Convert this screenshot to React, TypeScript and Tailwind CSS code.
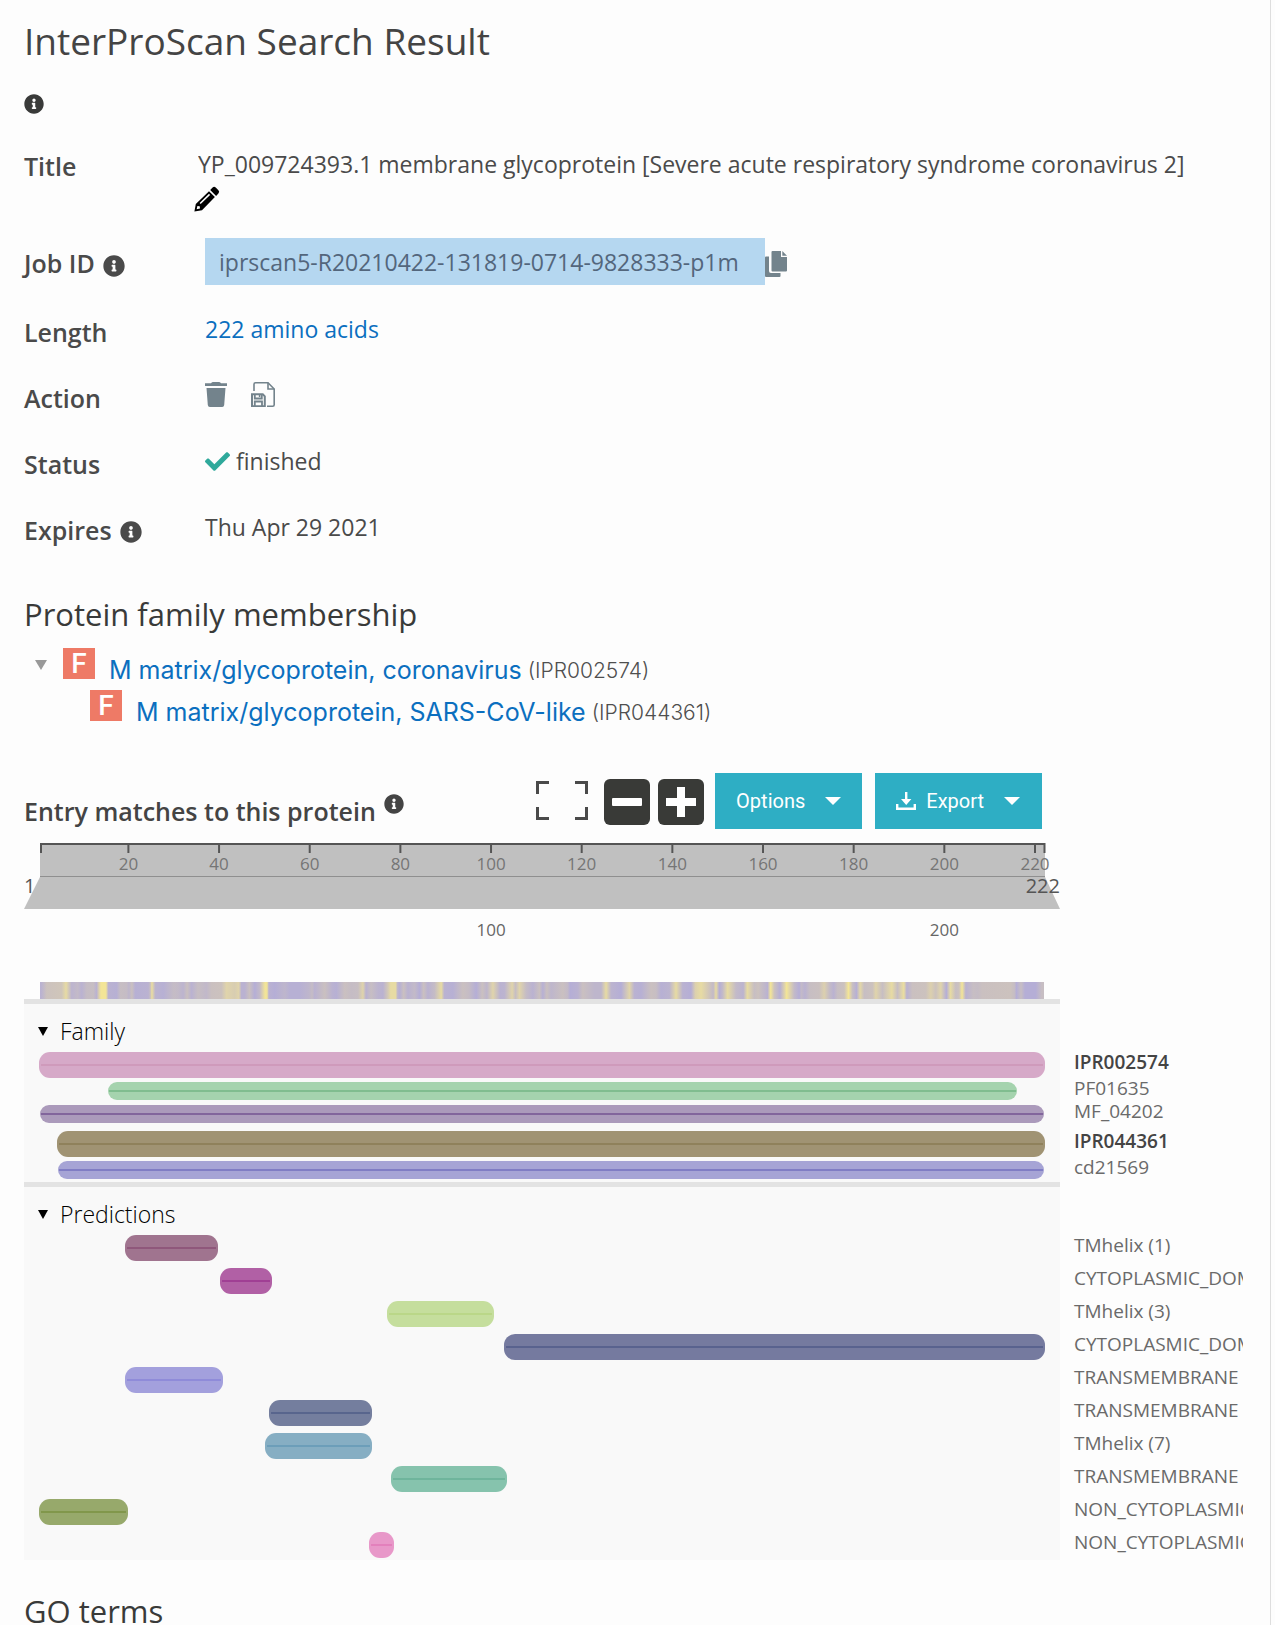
import React from "react";
import { FaInfoCircle, FaCheck } from "react-icons/fa";

const RESIDUES = 222;

type Bar = { label: string; start: number; end: number; fill: string; line: string };

const family: (Bar & { main: boolean; row: string })[] = [
  { label: "IPR002574", start: 1, end: 222, fill: "#d6a9c8", line: "#cd96b8", main: true, row: "h-[30px]" },
  { label: "PF01635", start: 16, end: 216, fill: "#a5d3ae", line: "#80bd8f", main: false, row: "h-[23px]" },
  { label: "MF_04202", start: 1, end: 222, fill: "#ab9abb", line: "#82659c", main: false, row: "h-[26px]" },
  { label: "IPR044361", start: 5, end: 222, fill: "#a09373", line: "#8b7d55", main: true, row: "h-[30px]" },
  { label: "cd21569", start: 5, end: 222, fill: "#a6a4d5", line: "#807dc4", main: false, row: "h-[21px]" },
];

const predictions: Bar[] = [
  { label: "TMhelix (1)", start: 20, end: 39, fill: "#a0748f", line: "#8b5076" },
  { label: "CYTOPLASMIC_DOMAIN", start: 41, end: 51, fill: "#b160a5", line: "#9c3790" },
  { label: "TMhelix (3)", start: 78, end: 100, fill: "#c5de9d", line: "#b6d583" },
  { label: "CYTOPLASMIC_DOMAIN", start: 104, end: 222, fill: "#757a9f", line: "#525c8a" },
  { label: "TRANSMEMBRANE", start: 20, end: 40, fill: "#a3a0dd", line: "#8a86d8" },
  { label: "TRANSMEMBRANE", start: 52, end: 73, fill: "#747e9e", line: "#515f88" },
  { label: "TMhelix (7)", start: 51, end: 73, fill: "#86aec3", line: "#659ab7" },
  { label: "TRANSMEMBRANE", start: 79, end: 103, fill: "#86c3ad", line: "#69b197" },
  { label: "NON_CYTOPLASMIC_DOMAIN", start: 1, end: 19, fill: "#97a96b", line: "#7c9244" },
  { label: "NON_CYTOPLASMIC_DOMAIN", start: 74, end: 78, fill: "#e898c9", line: "#e17bb9" },
];

// Hydrophobicity samples: position (out of 3015) and value (0 mauve, 0.5 beige, 1 yellow).
const hydro: [number, number][] = [
  [3, 0.1], [10, 0.25], [20, 0.5], [65, 0.55], [78, 0.85], [95, 0.15], [113, 0.3], [125, 0.1], [140, 0.35], [160, 0.4],
  [170, 0.1], [177, 0.7], [183, 1], [198, 1], [205, 0.1], [230, 0.05], [242, 0.4], [260, 0.35], [267, 0.2], [276, 0.45],
  [286, 0.05], [325, 0.1], [331, 0.4], [336, 0.9], [346, 0.15], [370, 0.05], [402, 0.35], [415, 0.3], [430, 0.15],
  [442, 0.45], [455, 0.1], [475, 0.4], [500, 0.25], [515, 0.45], [545, 0.5], [560, 0.75], [585, 0.65], [597, 0.75],
  [605, 0.1], [615, 0.1], [629, 0.45], [645, 0], [660, 0.3], [676, 1], [682, 0.95], [687, 0.1], [705, 0], [735, 0.2],
  [750, 0.05], [780, 0.05], [808, 0.2], [817, 0.35], [825, 0.1], [855, 0.45], [878, 0.1], [890, 0.05], [915, 0.45],
  [935, 0.35], [955, 0.4], [970, 0.75], [979, 0.1], [994, 0.4], [1015, 0.15], [1030, 0.1], [1045, 0.6], [1053, 0.85],
  [1068, 0.85], [1074, 0.2], [1080, 0.05], [1092, 0.45], [1105, 0.1], [1125, 0.3], [1140, 0], [1152, 0.45], [1165, 0.1],
  [1185, 0.35], [1205, 0.85], [1214, 0.1], [1240, 0.05], [1270, 0.45], [1288, 0.35], [1310, 0], [1328, 0.45],
  [1342, 0.2], [1360, 0.75], [1382, 0.1], [1395, 0.15], [1418, 0.75], [1428, 0.4], [1440, 0.75], [1460, 0.35],
  [1480, 0.1], [1500, 0.45], [1510, 0.05], [1522, 0.45], [1535, 0.2], [1570, 0.45], [1585, 0.3], [1592, 0], [1615, 0.1],
  [1630, 0.45], [1665, 0.2], [1685, 0.2], [1700, 0.85], [1715, 0.15], [1745, 0], [1770, 0.75], [1785, 0.1], [1805, 0.05],
  [1835, 0.45], [1850, 0.4], [1865, 0.05], [1890, 0.15], [1910, 0.85], [1930, 0.1], [1955, 0], [1968, 0.7], [1985, 0.85],
  [2005, 0.6], [2022, 0.3], [2030, 0.85], [2040, 0], [2050, 0.3], [2065, 0.85], [2090, 0.3], [2112, 0.15], [2124, 0.85],
  [2145, 0.4], [2157, 0.5], [2185, 0.1], [2194, 1], [2205, 0.5], [2222, 0.05], [2235, 0.7], [2242, 1], [2265, 0.3],
  [2280, 0], [2286, 0.3], [2297, 0.1], [2312, 0.4], [2340, 0.45], [2355, 0.7], [2370, 0.35], [2383, 0.1], [2395, 0.4],
  [2415, 0.5], [2428, 1], [2440, 0.4], [2452, 0.05], [2463, 0.8], [2475, 0.4], [2500, 0.5], [2510, 0.75], [2530, 0.4],
  [2558, 0.85], [2575, 0.4], [2594, 0.9], [2603, 0.1], [2620, 0.45], [2660, 0.5], [2675, 0.7], [2690, 0.5], [2705, 0.75],
  [2722, 0], [2734, 0.85], [2750, 0.4], [2760, 0.5], [2769, 1], [2780, 0.1], [2803, 0.4], [2815, 0.35], [2830, 0.45],
  [2915, 0.5], [2927, 0.35], [2932, 0], [2946, 0.4], [2958, 0], [2990, 0], [3008, 0.4],
];

const mauve = [181, 174, 214];
const beige = [204, 194, 190];
const yellow = [243, 229, 151];

function hydroColour(v: number) {
  const low = v < 0.5;
  const a = low ? mauve : beige;
  const b = low ? beige : yellow;
  const t = low ? v * 2 : v * 2 - 1;
  return `rgb(${a.map((c, i) => Math.round(c + (b[i] - c) * t)).join(",")})`;
}

const hydroGradient = `linear-gradient(to right, ${hydro
  .map(([x, v]) => `${hydroColour(v)} ${((x / 3015) * 100).toFixed(2)}%`)
  .join(", ")})`;

function PencilIcon() {
  return (
    <svg viewBox="0 0 26 26" className="h-[26px] w-[26px]" fill="#000" aria-hidden="true">
      <path d="M18.600 1.600a2.200 2.200 0 0 1 3.100 0l2.700 2.700a2.200 2.200 0 0 1 0 3.100l-2.300 2.500-5.900-5.900z" />
      <path fillRule="evenodd" d="M15 5.200l5.900 5.900L8 24.200l-7.600 1.400L1.800 18zM15 7.800L5.600 17l1.100 1.100L16.100 8.900zM3.400 20l-.7 3.300 3.300-.7-.3-2.300z" />
    </svg>
  );
}

function CopyIcon() {
  return (
    <svg viewBox="0 0 22 26" className="h-[26px] w-[22px]" fill="#73838c" aria-hidden="true">
      <path d="M0 6.500q0-1 1-1h3v14.500q0 2 2 2h9.500v3q0 1-1 1H1q-1 0-1-1z" />
      <path d="M6.500 1q0-1 1-1H16v6h6v13.500q0 1-1 1H7.500q-1 0-1-1z" />
      <path d="M17.300 0l4.700 4.800h-4.700z" />
    </svg>
  );
}

function TrashIcon() {
  return (
    <svg viewBox="0 0 22 25" className="h-[25px] w-[22px]" fill="#73838c" aria-hidden="true">
      <path d="M0 1.200h6Q7 0 8 0h6q1 0 2 1.200h6V4H0zM1.500 6h19l-1.300 17q-.2 2-2 2H4.800q-1.800 0-2-2z" />
    </svg>
  );
}

function SaveIcon() {
  return (
    <svg viewBox="0 0 24 25" className="h-[25px] w-[24px]" fill="none" stroke="#73838c" strokeWidth="1.600" aria-hidden="true">
      <path d="M3 9V2.300Q3 .8 4.500.8H17l6.200 6.200v15.700q0 1.500-1.500 1.500H16" />
      <path d="M17 .8V7h6.200" />
      <path d="M1 12.300h10.800l2 2v9.900H1z" strokeWidth="2" />
      <path d="M3.800 12.300v4.200h7v-4.200M3.800 24.200v-4.700h7.200v4.700" strokeWidth="1.800" />
      <path d="M8.600 13v2" />
    </svg>
  );
}

function ExpandIcon() {
  return (
    <svg viewBox="0 0 52 39" className="h-[39px] w-[52px]" fill="none" stroke="#4a4a4a" strokeWidth="3" aria-hidden="true">
      <path d="M1.500 13V1.500H13M39 1.500h11.500V13M50.500 26v11.500H39M13 37.500H1.500V26" />
    </svg>
  );
}

function DownloadIcon() {
  return (
    <svg viewBox="0 0 20 18" className="h-[18px] w-5" fill="#fff" aria-hidden="true">
      <path d="M9 0h2.400v7h4L10.200 13 5 7h4zM0 12h2.400v3.500h15.200V12H20v6H0z" />
    </svg>
  );
}

function Caret() {
  return (
    <svg viewBox="0 0 16 8" className="h-2 w-4" fill="#fff" aria-hidden="true">
      <path d="M0 0h16L8 8z" />
    </svg>
  );
}

function Triangle({ className }: { className: string }) {
  return (
    <svg viewBox="0 0 10 9" className={className} preserveAspectRatio="none" aria-hidden="true">
      <path d="M0 0h10L5 9z" fill="currentColor" />
    </svg>
  );
}

function Field({ label, info, children }: { label: string; info?: boolean; children: React.ReactNode }) {
  return (
    <div className="grid h-[34px] grid-cols-[181px_1fr]">
      <dt className="flex items-center gap-2 pt-[3px] text-[25px] font-semibold leading-8">
        {label}
        {info && <FaInfoCircle className="mt-1 h-[22px] w-[22px]" />}
      </dt>
      <dd className="flex items-start leading-8">{children}</dd>
    </div>
  );
}

function FamilyLink({ name, id }: { name: string; id: string }) {
  return (
    <>
      <span className="flex h-[31px] w-8 shrink-0 items-center justify-center bg-[#ee7a66] font-['Roboto',sans-serif] text-[28px] font-medium text-white">
        F
      </span>
      <a href="#family" className="ml-3.5 text-[25px] leading-[44px] text-[#0b6fbf]">
        {name}
      </a>
      <span className="ml-1.5 text-[21px] font-light leading-[46px] text-[#4f4f4f]">({id})</span>
    </>
  );
}

function TrackBar({ bar, thick }: { bar: Bar; thick: boolean }) {
  const left = ((bar.start - 1) / RESIDUES) * 100;
  const width = ((bar.end - bar.start + 1) / RESIDUES) * 100;
  return (
    <div
      className={thick ? "flex h-[26px] items-center rounded-[11px]" : "flex h-[18px] items-center rounded-[9px]"}
      style={{
        marginLeft: thick ? `calc(${left}% - 1px)` : `${left}%`,
        width: thick ? `calc(${width}% + 3px)` : `calc(${width}% + 1px)`,
        backgroundColor: bar.fill,
      }}
    >
      <div
        className={thick ? "mx-0.5 h-0.5 w-full opacity-80" : "mx-px h-0.5 w-full"}
        style={{ backgroundColor: bar.line }}
      />
    </div>
  );
}

function GroupHeader({ title }: { title: string }) {
  return (
    <div className="grid grid-cols-[1fr_169px] gap-x-3.5">
      <div className="border-t-[5px] border-[#e3e3e3] bg-[#f9f9f9]">
        <button type="button" className="flex h-12 items-center gap-3 pl-3.5 pt-1.5 text-[23px] font-light text-black">
          <Triangle className="h-[9px] w-2.5" />
          {title}
        </button>
      </div>
    </div>
  );
}

const tickX = (n: number) => 16 + (n - 0.5) * 4.533;

function Ruler() {
  const ticks = [20, 40, 60, 80, 100, 120, 140, 160, 180, 200, 220];
  return (
    <svg viewBox="0 0 1036 139" className="w-full" role="img" aria-label="Sequence ruler, residues 1 to 222">
      <path d="M16 0H1021V34L1036 66H0L16 34z" fill="#c0c0c0" />
      <path d="M16 1H1021M17 0v10M1020.500 0v10" stroke="#555" strokeWidth="2" fill="none" />
      <path d="M16 33.500H1021" stroke="#8f8f8f" strokeWidth="1" />
      {ticks.map((n) => (
        <g key={n}>
          <path d={`M${tickX(n)} 1v9`} stroke="#555" strokeWidth="2" />
          <text x={tickX(n)} y="27" fontSize="17" textAnchor="middle" fill="#757575">
            {n}
          </text>
        </g>
      ))}
      <text x="0" y="50" fontSize="20" fill="#555">1</text>
      <text x="1036" y="50" fontSize="20" textAnchor="end" fill="#555">222</text>
      <text x={tickX(100)} y="93" fontSize="17" textAnchor="middle" fill="#666">100</text>
      <text x={tickX(200)} y="93" fontSize="17" textAnchor="middle" fill="#666">200</text>
    </svg>
  );
}

export default function App() {
  return (
    <div className="min-h-screen bg-[#fdfdfd] pr-1 font-['Open_Sans',sans-serif] text-[23px] text-[#4a4a4a]">
      <main className="min-h-screen border-r border-[#dedede] pl-6 pr-[27px] pt-3">
        <h1 className="text-[37px] leading-[58px] text-[#444]">InterProScan Search Result</h1>
        <FaInfoCircle className="mt-6 h-5 w-5 text-[#393a39]" />

        <dl className="mt-[34px] flex flex-col">
          <div className="grid grid-cols-[170px_1fr]">
            <dt className="pt-0.5 text-[25px] font-semibold leading-8">
              <label htmlFor="job-title">Title</label>
            </dt>
            <dd>
              <input
                id="job-title"
                className="block h-8 w-full bg-transparent pl-1 outline-none"
                defaultValue="YP_009724393.1 membrane glycoprotein [Severe acute respiratory syndrome coronavirus 2]"
              />
              <button type="button" aria-label="Edit title" className="mt-1.5 block">
                <PencilIcon />
              </button>
            </dd>
          </div>

          <div className="mt-[26px] grid grid-cols-[181px_1fr]">
            <dt className="flex items-center gap-2 pt-1 text-[25px] font-semibold">
              Job ID
              <FaInfoCircle className="mt-1 h-[22px] w-[22px]" />
            </dt>
            <dd className="flex items-center">
              <span className="bg-[#b5d7f0] pb-[7px] pl-3.5 pr-[26px] pt-2 leading-8 text-[#53667c]">
                iprscan5-R20210422-131819-0714-9828333-p1m
              </span>
              <button type="button" aria-label="Copy job ID" className="mt-1">
                <CopyIcon />
              </button>
            </dd>
          </div>

          <div className="mt-7 flex flex-col gap-8">
            <Field label="Length">
              <a href="#sequence" className="text-[#0b6fbf]">222 amino acids</a>
            </Field>
            <Field label="Action">
              <span className="flex gap-6 pt-[3px]">
                <button type="button" aria-label="Delete"><TrashIcon /></button>
                <button type="button" aria-label="Save"><SaveIcon /></button>
              </span>
            </Field>
            <Field label="Status">
              <FaCheck className="mr-1.5 mt-1 h-[25px] w-[25px] text-[#2fa99b]" />
              finished
            </Field>
            <Field label="Expires" info>
              Thu Apr 29 2021
            </Field>
          </div>
        </dl>

        <h2 className="mt-[49px] text-[31px] leading-10 text-[#393a39]">Protein family membership</h2>
        <ul className="mt-3.5 font-['Inter',sans-serif]">
          <li>
            <div className="flex h-[42px] items-start">
              <button type="button" aria-label="Collapse" className="ml-[11px] mr-4 mt-3 block">
                <Triangle className="h-2.5 w-3 text-[#999]" />
              </button>
              <FamilyLink name="M matrix/glycoprotein, coronavirus" id="IPR002574" />
            </div>
            <ul>
              <li className="flex h-[42px] items-start pl-[66px]">
                <FamilyLink name="M matrix/glycoprotein, SARS-CoV-like" id="IPR044361" />
              </li>
            </ul>
          </li>
        </ul>

        <div className="mr-[201px] mt-[41px] flex h-14 items-start">
          <h3 className="flex flex-1 gap-2 pt-2.5 text-[25px] font-semibold leading-[56px] text-[#444]">
            Entry matches to this protein
            <FaInfoCircle className="mt-[11px] h-5 w-5" />
          </h3>
          <div className="flex items-start">
            <button type="button" aria-label="Full screen" className="mr-4 mt-2 block">
              <ExpandIcon />
            </button>
            <button type="button" aria-label="Zoom out" className="mr-2 mt-1.5 flex h-[46px] w-[46px] items-center justify-center rounded-md bg-[#393a37]">
              <span className="h-2 w-[30px] rounded-[1px] bg-white" />
            </button>
            <button type="button" aria-label="Zoom in" className="mr-[11px] mt-1.5 flex h-[46px] w-[46px] items-center justify-center rounded-md bg-[#393a37]">
              <svg viewBox="0 0 30 30" className="h-[30px] w-[30px]" fill="#fff" aria-hidden="true">
                <path d="M11 0h8v11h11v8H19v11h-8V19H0v-8h11z" />
              </svg>
            </button>
            <button type="button" className="mr-[13px] flex h-14 items-center gap-5 bg-[#2eaec4] px-[21px] font-['Roboto',sans-serif] text-[20px] text-white">
              Options
              <Caret />
            </button>
            <button type="button" className="flex h-14 items-center bg-[#2eaec4] pl-[21px] pr-[22px] font-['Roboto',sans-serif] text-[20px] text-white">
              <DownloadIcon />
              <span className="ml-2.5 mr-5">Export</span>
              <Caret />
            </button>
          </div>
        </div>

        <div className="mr-[183px] mt-3.5">
          <Ruler />
          <div className="ml-4 mr-4 h-[17px]" style={{ backgroundImage: hydroGradient }} />
        </div>

        <section className="text-[19px]">
          <GroupHeader title="Family" />
          {family.map((b) => (
            <div key={b.label} className="grid grid-cols-[1fr_169px] gap-x-3.5">
              <div className={`bg-[#f9f9f9] pl-4 pr-[17px] ${b.row}`}>
                <TrackBar bar={b} thick={b.main} />
              </div>
              <a
                href="#entry"
                className={b.main ? "font-semibold leading-5 text-[#444]" : "leading-3 text-[#6a6a6a]"}
              >
                {b.label}
              </a>
            </div>
          ))}
        </section>
        <section className="overflow-hidden text-[19px]">
          <GroupHeader title="Predictions" />
          {predictions.map((b, i) => (
            <div key={i} className="grid h-[33px] grid-cols-[1fr_169px] gap-x-3.5 last:h-7">
              <div className="bg-[#f9f9f9] pl-4 pr-[17px]">
                <TrackBar bar={b} thick />
              </div>
              <a href="#entry" className="whitespace-nowrap leading-5 text-[#6a6a6a]">
                {b.label}
              </a>
            </div>
          ))}
        </section>

        <h2 className="mt-[37px] text-[31px] leading-7 text-[#393a39]">GO terms</h2>
      </main>
    </div>
  );
}
